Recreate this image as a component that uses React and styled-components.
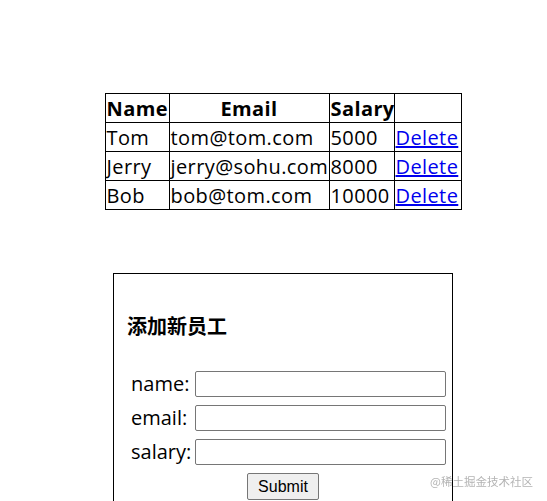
import styled, { createGlobalStyle } from "styled-components";

const employees = [
  { id: 1, name: "Tom", email: "tom@tom.com", salary: 5000 },
  { id: 2, name: "Jerry", email: "jerry@sohu.com", salary: 8000 },
  { id: 3, name: "Bob", email: "bob@tom.com", salary: 10000 },
];

const fields = ["name", "email", "salary"];

const App = () => {
  return (
    <Page>
      <GlobalStyle />
      <Table>
        <colgroup>
          <col style={{ width: "64px" }} />
          <col style={{ width: "160px" }} />
          <col style={{ width: "65px" }} />
          <col style={{ width: "67px" }} />
        </colgroup>
        <thead>
          <tr>
            <Th>Name</Th>
            <Th>Email</Th>
            <Th>Salary</Th>
            <Th></Th>
          </tr>
        </thead>
        <tbody>
          {employees.map((emp) => (
            <tr key={emp.id}>
              <Td>{emp.name}</Td>
              <Td>{emp.email}</Td>
              <Td>{emp.salary}</Td>
              <Td>
                <DeleteLink href="#">Delete</DeleteLink>
              </Td>
            </tr>
          ))}
        </tbody>
      </Table>

      <FormBox>
        <Title>添加新员工</Title>
        <FieldGrid>
          {fields.map((f) => (
            <FieldRow key={f}>
              <Label>{f}:</Label>
              <Input type="text" />
            </FieldRow>
          ))}
        </FieldGrid>
        <ButtonRow>
          <SubmitButton>Submit</SubmitButton>
        </ButtonRow>
      </FormBox>

      <Watermark>@稀土掘金技术社区</Watermark>
    </Page>
  );
};

export default App;

const GlobalStyle = createGlobalStyle`
  html, body {
    margin: 0;
    padding: 0;
    overflow: hidden;
    background: #fff;
  }
  body {
    font-family: "Open Sans", "Noto Sans CJK SC", sans-serif;
    color: #000;
  }
`;

const Page = styled.div`
  width: 528px;
  padding: 93px 0 0 19px;
`;

const Table = styled.table`
  margin: 0 auto;
  width: 356px;
  table-layout: fixed;
  border-collapse: collapse;
  font-size: 20px;
  letter-spacing: 0.4px;
`;

const Th = styled.th`
  border: 1px solid #000;
  padding: 2px 1px 0;
  line-height: 26px;
  font-weight: 700;
  text-align: center;
  white-space: nowrap;
  overflow: hidden;
`;

const Td = styled.td`
  border: 1px solid #000;
  padding: 2px 1px 0;
  line-height: 26px;
  white-space: nowrap;
  overflow: hidden;
`;

const DeleteLink = styled.a`
  color: #0000ee;
  text-decoration: underline;
`;

const FormBox = styled.div`
  box-sizing: border-box;
  width: 340px;
  margin: 63px auto 0;
  padding: 40px 13px 30px;
  border: 1px solid #000;
`;

const Title = styled.h3`
  margin: 0 0 33px;
  font-family: "Noto Sans CJK SC", sans-serif;
  font-size: 20px;
  line-height: 24px;
  font-weight: 700;
`;

const FieldGrid = styled.div`
  display: flex;
  flex-direction: column;
  gap: 8px;
  margin-left: 4px;
`;

const FieldRow = styled.div`
  display: grid;
  grid-template-columns: 60px 251px;
  align-items: center;
  column-gap: 4px;
`;

const Label = styled.label`
  font-size: 20px;
  line-height: 26px;
  white-space: nowrap;
`;

const Input = styled.input`
  box-sizing: border-box;
  width: 251px;
  height: 26px;
  margin: 0;
  border: 1px solid #767676;
  border-radius: 2px;
  background: #fff;
`;

const ButtonRow = styled.div`
  display: flex;
  justify-content: center;
  margin-top: 8px;
`;

const SubmitButton = styled.button`
  box-sizing: border-box;
  height: 27px;
  padding: 0 10px;
  font-family: "Liberation Sans", Arial, sans-serif;
  font-size: 16px;
  color: #000;
  background: #efefef;
  border: 1px solid #767676;
  border-radius: 2px;
`;

const Watermark = styled.div`
  position: fixed;
  right: 14px;
  bottom: 12px;
  font-family: "Noto Sans CJK SC", sans-serif;
  font-size: 11.5px;
  color: #b4b4b4;
`;
